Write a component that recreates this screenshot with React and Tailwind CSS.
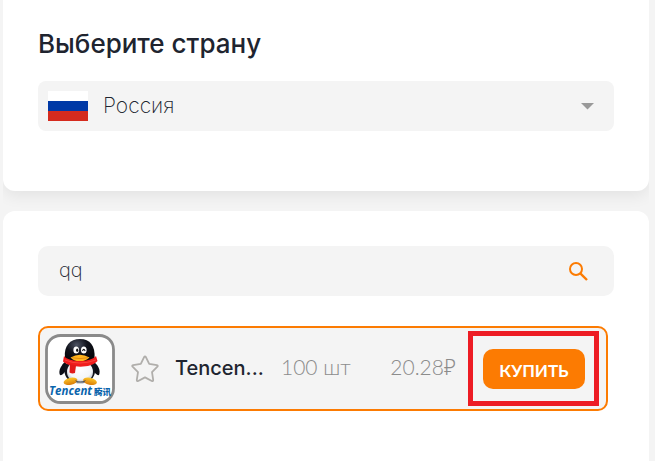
import React, { useState } from 'react';

function RussiaFlag() {
    return (
        <svg viewBox="0 0 40 30" className="w-10 h-[30px] shrink-0" aria-hidden="true">
            <rect width="40" height="10" fill="#ffffff" />
            <rect y="10" width="40" height="10" fill="#0039a6" />
            <rect y="20" width="40" height="10" fill="#d52b1e" />
        </svg>
    );
}

function TencentLogo() {
    return (
        <svg viewBox="0 0 70 70" className="w-[70px] h-[70px] shrink-0" role="img" aria-label="Tencent QQ">
            <defs>
                <radialGradient id="head" cx="0.4" cy="0.25" r="0.7">
                    <stop offset="0" stopColor="#4d5363" />
                    <stop offset="0.5" stopColor="#10121b" />
                    <stop offset="1" stopColor="#05060a" />
                </radialGradient>
                <radialGradient id="belly" cx="0.5" cy="0.35" r="0.65">
                    <stop offset="0" stopColor="#ffffff" />
                    <stop offset="0.7" stopColor="#f3f5f8" />
                    <stop offset="1" stopColor="#a9b1bd" />
                </radialGradient>
                <linearGradient id="feet" x1="0" y1="0" x2="0" y2="1">
                    <stop offset="0" stopColor="#ffc928" />
                    <stop offset="1" stopColor="#d87a08" />
                </linearGradient>
            </defs>
            <rect x="1.5" y="1.5" width="67" height="67" rx="14" fill="#ffffff" stroke="#8a8a8a" strokeWidth="2.8" />
            {/* Wings and body */}
            <path d="M21 27C16 31 13 37 15 41C17 42 20 38 22 35Z" fill="#0c0e16" />
            <path d="M48 27C53 31 56 36 54 41C52 42 49 38 46 34Z" fill="#0c0e16" />
            <path d="M20 30C17 43 24 49 35 49C46 49 53 42 49 29Z" fill="#11131b" />
            <ellipse cx="35" cy="38" rx="13" ry="11.5" fill="url(#belly)" />
            {/* Feet */}
            <ellipse cx="25.5" cy="47.3" rx="7" ry="3.5" fill="url(#feet)" transform="rotate(-12 25.5 47.3)" />
            <ellipse cx="45" cy="47.3" rx="7" ry="3.5" fill="url(#feet)" transform="rotate(12 45 47.3)" />
            <path d="M30 46Q35 49 41 46L39 48.5H32Z" fill="#4a4e57" />
            {/* Head */}
            <path d="M20 24C18.5 12 25 5 35 5C45 5 50.5 12 49.5 24C48 30 22 30 20 24Z" fill="url(#head)" />
            <ellipse cx="31.2" cy="16" rx="2.8" ry="3.5" fill="#ffffff" />
            <ellipse cx="38.8" cy="16" rx="2.8" ry="3.5" fill="#ffffff" />
            <ellipse cx="32.2" cy="16.3" rx="1.1" ry="1.8" fill="#111111" />
            <path d="M37.5 17Q38.8 13.8 40.1 17" fill="none" stroke="#111111" strokeWidth="1.1" />
            <path d="M25.5 23.5Q35 18 44.5 23.5Q40 27.5 35 27.5Q29 27.5 25.5 23.5Z" fill="#ffb41d" />
            <path d="M27 23.7Q35 25.5 43 23.7" fill="none" stroke="#d17a0c" strokeWidth="0.7" />
            {/* Scarf */}
            <path d="M19 22C24 28.5 45 29 51 22L52.5 27C46 34.5 26 34.5 18 27.5Z" fill="#f01d1d" />
            <path d="M25 30L31 31.5L30 39Q27 40 24.5 38.5Z" fill="#e11a1a" />
            <path d="M20 26Q34 32 51 26" fill="none" stroke="#ff6a5c" strokeWidth="0.5" />
            <text
                x="4"
                y="60.5"
                fontSize="11.5"
                fontWeight="700"
                fontStyle="italic"
                fill="#0a64ac"
                fontFamily='"Open Sans", sans-serif'
            >
                Tencent
            </text>
            <text x="49" y="60.5" fontSize="8.5" fontWeight="900" fill="#0a64ac" fontFamily='"Noto Sans CJK SC", sans-serif'>
                腾讯
            </text>
        </svg>
    );
}

function ServiceRow({ name, count, price }) {
    const [favorite, setFavorite] = useState(false);

    return (
        <div className="mt-[30px] mr-[6px] flex items-center rounded-[10px] border-2 border-[#fc7b02] bg-[#f4f4f4] pt-[6px] pb-[5px] pl-[5px] pr-[21px]">
            <TencentLogo />
            <button
                type="button"
                aria-label="В избранное"
                aria-pressed={favorite}
                onClick={() => setFavorite(!favorite)}
                className="ml-4 shrink-0"
            >
                <svg viewBox="0 0 28 28" className="w-7 h-7" fill={favorite ? '#fc7b02' : 'none'} stroke="#b0aeab" strokeWidth="1.8" strokeLinejoin="round">
                    <path d="M13.1 2.1Q14 .9 14.9 2.1L18.2 8.9L25.9 10.1Q27.4 10.5 26.4 11.7L21 17.2L22.2 24.9Q22.2 26.5 20.8 26L14 22.4L7.2 26Q5.8 26.5 5.8 24.9L7 17.2L1.6 11.7Q.6 10.5 2.1 10.1L9.8 8.9Z" />
                </svg>
            </button>
            <span className="ml-4 min-w-[90px] shrink-0 whitespace-nowrap pb-0.5 font-['Inter',sans-serif] text-xl leading-7 font-medium text-[#20242f]">{name}</span>
            <span className="ml-4 shrink-0 whitespace-nowrap pb-1 text-[21px] leading-7 font-light text-[#8c8c8c]">{count} шт</span>
            <span className="ml-auto whitespace-nowrap pb-1 text-[21px] leading-7 font-light text-[#8c8c8c]">{price}₽</span>
            <div className="relative ml-[27px] shrink-0">
                <button type="button" className="block h-10 w-[102px] rounded-[10px] bg-[#fc7b02] pt-[2px] text-[17px] leading-none font-bold text-white">
                    КУПИТЬ
                </button>
                <div className="pointer-events-none absolute -top-[18px] -right-[14px] -bottom-[17px] -left-[15px] border-5 border-[#ed1c24]" />
            </div>
        </div>
    );
}

export default function App() {
    const [query, setQuery] = useState('qq');

    return (
        <div className="min-h-screen bg-[#f4f4f4] pl-[3px] pr-[6px] font-['Lato','Noto_Sans',sans-serif]">
            <main className="flex min-h-screen flex-col gap-5 overflow-hidden">
                <section className="rounded-b-xl bg-white px-[35px] pt-7 pb-[60px] shadow-[0_5px_15px_rgba(0,0,0,0.07)]">
                    <label htmlFor="country" className="block font-['Inter',sans-serif] text-[26px] leading-8 font-medium text-[#20242f]">
                        Выберите страну
                    </label>
                    <div className="mt-[21px] flex h-[50px] items-center rounded-lg bg-[#f4f4f4] pl-[10px] pr-5">
                        <RussiaFlag />
                        <select id="country" className="ml-[15px] h-full flex-1 appearance-none bg-transparent font-['Inter',sans-serif] text-[21px] font-extralight text-[#20242f] outline-none">
                            <option>Россия</option>
                        </select>
                        <svg viewBox="0 0 13 7" className="pointer-events-none w-[13px] h-[7px]" aria-hidden="true">
                            <path d="M0 0H13L6.5 6.5Z" fill="#999999" />
                        </svg>
                    </div>
                </section>

                <section className="flex-1 rounded-t-xl bg-white px-[35px] pt-[35px] pb-[35px]">
                    <div className="flex h-[50px] items-center rounded-[10px] bg-[#f4f4f4] pl-[21px] pr-[26px]">
                        <input
                            type="text"
                            aria-label="Поиск сервиса"
                            value={query}
                            onChange={(e) => setQuery(e.target.value)}
                            className="h-full min-w-0 flex-1 bg-transparent pb-0.5 font-['Inter',sans-serif] text-xl font-extralight text-[#20242f] outline-none"
                        />
                        <button type="button" aria-label="Найти">
                            <svg viewBox="0 0 19 19" className="w-[19px] h-[19px]" fill="none" stroke="#fc7b02" strokeWidth="2">
                                <circle cx="7" cy="7" r="6" />
                                <path d="M11.3 11.3L18 18" strokeWidth="2.4" />
                            </svg>
                        </button>
                    </div>
                    <ServiceRow name="Tencen..." count={100} price="20.28" />
                </section>
            </main>
        </div>
    );
}
